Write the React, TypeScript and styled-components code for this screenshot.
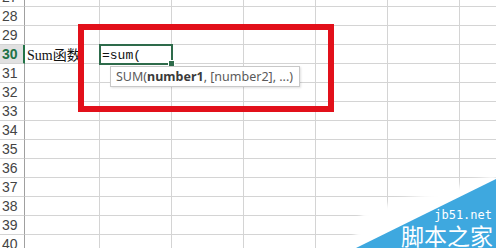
import React from "react";
import styled, { createGlobalStyle } from "styled-components";

const Global = createGlobalStyle`
  html, body { margin: 0; padding: 0; background: #fff; overflow: hidden; }
  #root { width: 496px; height: 248px; }
`;

const Sheet = styled.div`
  position: relative;
  width: 496px;
  height: 248px;
  overflow: hidden;
  background: #fff;
`;

const Grid = styled.div`
  display: flex;
  flex-direction: column;
  margin-top: -12px;
`;

const Row = styled.div`
  display: flex;
  height: 19px;
  flex: none;
`;

const RowHeader = styled.div<{ $active?: boolean }>`
  box-sizing: border-box;
  width: 25px;
  flex: none;
  height: 19px;
  border-bottom: 1px solid #d4d4d4;
  border-right: ${(p) => (p.$active ? "2px solid #217346" : "1px solid #a0a0a0")};
  background: ${(p) => (p.$active ? "#e1e1e1" : "#fff")};
  color: ${(p) => (p.$active ? "#217346" : "#444")};
  font-family: "Liberation Sans", sans-serif;
  font-size: 14px;
  font-weight: ${(p) => (p.$active ? 700 : 400)};
  line-height: 19px;
  padding-left: 2px;
`;

const Cell = styled.div<{ $w: number; $serif?: boolean }>`
  box-sizing: border-box;
  position: relative;
  width: ${(p) => p.$w}px;
  flex: none;
  height: 19px;
  border-right: 1px solid #d4d4d4;
  border-bottom: 1px solid #d4d4d4;
  white-space: nowrap;
  font-family: ${(p) =>
    p.$serif
      ? '"Liberation Serif", "Noto Sans CJK SC", serif'
      : '"Liberation Mono", "Noto Sans CJK SC", monospace'};
  font-size: ${(p) => (p.$serif ? 14 : 13)}px;
  line-height: 21px;
  color: #111;
  padding-left: 2px;
`;

const ActiveCell = styled(Cell)`
  outline: 2px solid #2e6b4b;
  outline-offset: -1px;
  z-index: 2;
`;

const FillHandle = styled.span`
  position: absolute;
  right: -4px;
  bottom: -4px;
  width: 5px;
  height: 5px;
  background: #2e6b4b;
  border: 1px solid #fff;
`;

const Tooltip = styled.div`
  position: absolute;
  left: 10px;
  top: 21px;
  box-sizing: border-box;
  height: 21px;
  padding: 0 6px 0 5px;
  background: #fff;
  border: 1px solid #c8c8c8;
  box-shadow: 1px 1px 2px rgba(0, 0, 0, 0.12);
  font-family: "Noto Sans", "Open Sans", sans-serif;
  font-size: 12.5px;
  line-height: 19px;
  color: #5a5a5a;
  white-space: nowrap;
  z-index: 3;
`;

const Arg = styled.b`
  font-weight: 700;
  color: #3a3a3a;
`;

const Annotation = styled.div`
  position: absolute;
  left: 78px;
  top: 24px;
  width: 256px;
  height: 88px;
  box-sizing: border-box;
  border: 6px solid #e2101a;
  z-index: 4;
  pointer-events: none;
`;

const Watermark = styled.div`
  position: absolute;
  right: 0;
  bottom: 0;
  width: 160px;
  height: 90px;
  z-index: 5;
`;

const WatermarkArt = styled.svg`
  position: absolute;
  inset: 0;
`;

const WatermarkText = styled.div`
  position: absolute;
  right: 3px;
  bottom: 1px;
  display: flex;
  flex-direction: column;
  align-items: flex-end;
  gap: 1px;
  color: #fff;
`;

const Domain = styled.span`
  font-family: "DejaVu Sans Mono", monospace;
  font-size: 12px;
  line-height: 14px;
  margin-right: 1px;
`;

const Brand = styled.span`
  font-family: "Noto Sans CJK SC", sans-serif;
  font-size: 23px;
  line-height: 24px;
`;

const COLS = [75, 72, 72, 72, 72, 72, 72];
const ROWS = Array.from({ length: 14 }, (_, i) => 27 + i);

export default function App() {
  return (
    <>
      <Global />
      <Sheet>
        <Grid>
          {ROWS.map((r) => (
            <Row key={r}>
              <RowHeader $active={r === 30}>{r}</RowHeader>
              {COLS.map((w, c) => {
                if (r === 30 && c === 0) {
                  return (
                    <Cell key={c} $w={w} $serif>
                      Sum函数
                    </Cell>
                  );
                }
                if (r === 30 && c === 1) {
                  return (
                    <ActiveCell key={c} $w={w}>
                      =sum(
                      <FillHandle />
                      <Tooltip>
                        SUM(<Arg>number1</Arg>, [number2], ...)
                      </Tooltip>
                    </ActiveCell>
                  );
                }
                return <Cell key={c} $w={w} />;
              })}
            </Row>
          ))}
        </Grid>
        <Annotation />
        <Watermark>
          <WatermarkArt width="160" height="90" viewBox="0 0 160 90">
            <defs>
              <filter id="haze" x="-20%" y="-20%" width="140%" height="140%">
                <feGaussianBlur stdDeviation="2.5" />
              </filter>
            </defs>
            <polygon
              points="0,90 18,80 26,54 72,40 122,28 160,16 160,90"
              fill="#fff"
              filter="url(#haze)"
            />
            <polygon points="20,90 160,21 160,90" fill="#3ea8df" />
          </WatermarkArt>
          <WatermarkText>
            <Domain>jb51.net</Domain>
            <Brand>脚本之家</Brand>
          </WatermarkText>
        </Watermark>
      </Sheet>
    </>
  );
}
